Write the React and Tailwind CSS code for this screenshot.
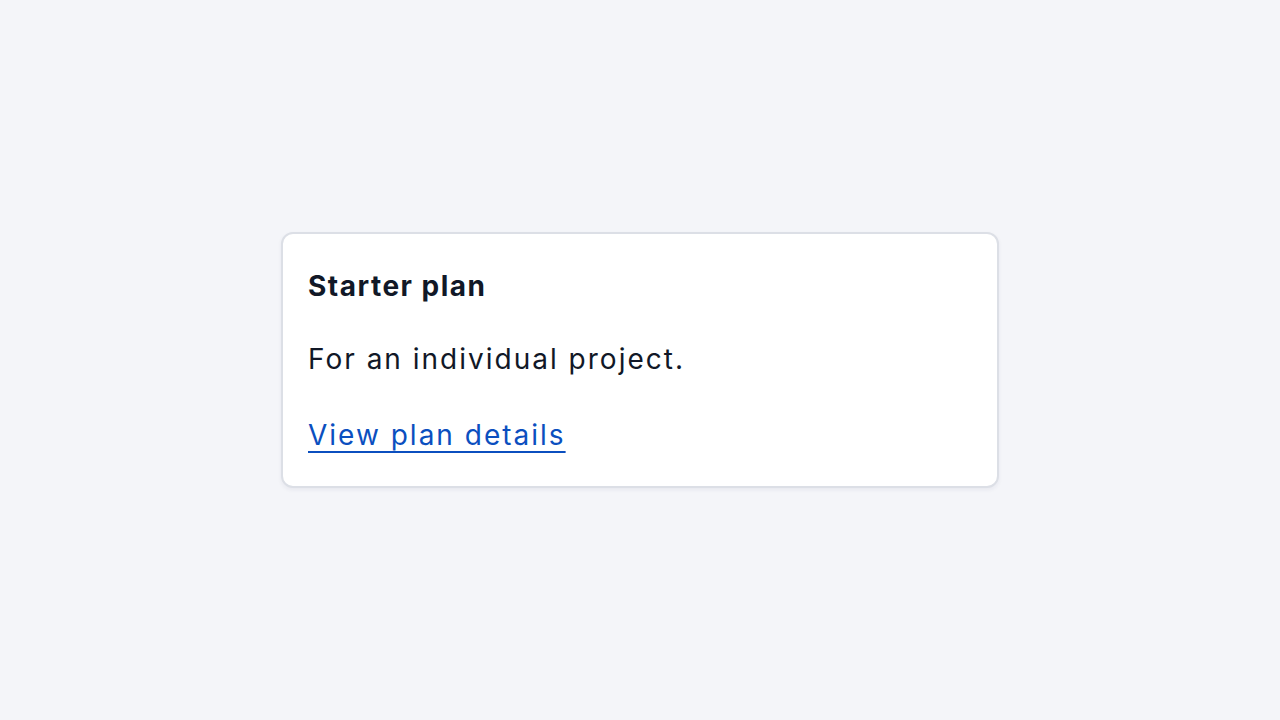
import React from 'react';

const PlanCard = ({ title, description, href, linkLabel }) => (
    <div className="w-[718px] rounded-xl border-2 border-[#dcdfe6] bg-white px-[25px] pt-[34px] pb-[33px] shadow-[0_2px_4px_rgba(30,40,80,0.06)]">
        <h2 className="text-[28px] leading-[36px] font-bold tracking-[1.5px] text-[#111827]">{title}</h2>
        <p className="mt-[37px] text-[28px] leading-[36px] tracking-[2px] text-[#111827]">{description}</p>
        <a
            href={href}
            className="mt-[40px] inline-block text-[28px] leading-[36px] tracking-[2px] text-[#0b4fbf] underline decoration-2 underline-offset-[6px]"
        >
            {linkLabel}
        </a>
    </div>
);

export default function App() {
    return (
        <div className="flex h-screen w-screen items-center justify-center bg-[#f4f5f9] font-['Inter',sans-serif]">
            <PlanCard
                title="Starter plan"
                description="For an individual project."
                href="#"
                linkLabel="View plan details"
            />
        </div>
    );
}
